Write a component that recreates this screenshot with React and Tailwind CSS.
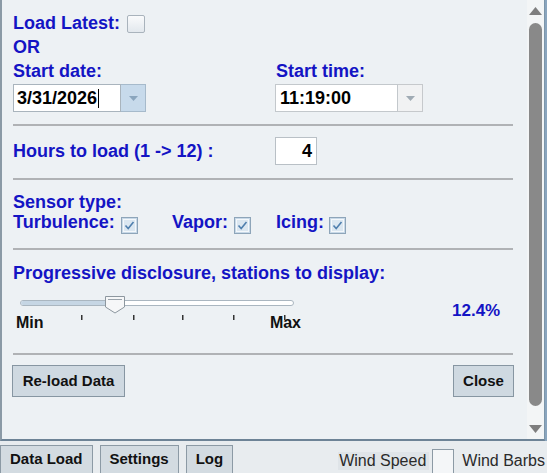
import React from "react"

const labelCls = "font-bold text-[18px] text-[#1414c4]"

function CheckedBox({ className = "" }) {
  return (
    <svg width="17" height="17" viewBox="0 0 17 17" className={className}>
      <rect x="0.5" y="0.5" width="16" height="16" fill="#c8d9e8" stroke="#8ea5b9" />
      <rect x="2.5" y="2.5" width="12" height="12" fill="#dbe7f1" stroke="#f4f8fb" />
      <path d="M4.5 8.5 L7.2 11.5 L12.5 5" fill="none" stroke="#4f7fae" strokeWidth="1.6" />
    </svg>
  )
}

function Separator({ className = "" }) {
  return <div className={`h-[2px] bg-[#b0b2b5] mr-[14px] ${className}`} />
}

function DropButton({ blue }) {
  return (
    <div
      className={`w-[25px] h-[28px] flex items-center justify-center border border-l-0 ${
        blue ? "bg-[#c7daeb] border-[#a6bacb]" : "bg-[#f1f2f3] border-[#c6c9cc]"
      }`}
    >
      <svg width="9" height="5" viewBox="0 0 9 5">
        <path d="M0 0 L9 0 L4.5 5 Z" fill={blue ? "#8aa5bd" : "#a0abb4"} />
      </svg>
    </div>
  )
}

function Slider() {
  const ticks = [68, 120, 169, 220, 271]
  return (
    <svg width="290" height="30" viewBox="0 0 290 30">
      <rect x="7.5" y="8.5" width="273" height="5" rx="2.5" fill="#ffffff" stroke="#aab6c0" />
      <rect x="8" y="9" width="92" height="4" rx="2" fill="#c6d6e4" />
      <path d="M92.5 4.5 L111.5 4.5 L111.5 15 L102 21 L92.5 15 Z" fill="#f6f7f8" stroke="#8d979f" />
      <line x1="95" y1="7.5" x2="109" y2="7.5" stroke="#9aa3ab" />
      {ticks.map((t) => (
        <rect key={t} x={t} y="23" width="1.5" height="5" fill="#333333" />
      ))}
    </svg>
  )
}

export default function App() {
  return (
    <div className="w-[547px] h-[473px] overflow-hidden bg-[#e8ecef] font-['Liberation_Sans',Arial,sans-serif] flex flex-col">
      <div className="flex h-[441px]">
        <div className="w-[545px] h-[441px] flex bg-[#edf1f4] border-l-2 border-b-2 border-r border-l-[#8b9aa6] border-b-[#6d8396] border-r-[#7c95a9]">
          {/* content */}
          <div className="flex-1 flex flex-col pl-[11px] pt-[11px]">
            <div className="flex items-start h-[24px]">
              <span className={`${labelCls} leading-[24px]`}>Load Latest:</span>
              <div className="ml-[7px] mt-[4px] w-[18px] h-[18px] rounded-[2px] border border-[#a9b3bc] bg-gradient-to-b from-[#fafbfc] to-[#e2e8ed]" />
            </div>
            <div className={`${labelCls} leading-[24px]`}>OR</div>
            <div className="grid grid-cols-[262px_auto]">
              <div className="flex flex-col">
                <span className={`${labelCls} leading-[24px]`}>Start date:</span>
                <div className="flex mt-px">
                  <div className="w-[108px] h-[28px] bg-white border border-[#a9b4bd] flex items-center pl-[3px] font-bold text-[18px] text-black">
                    3/31/2026
                    <span className="ml-px w-px h-[19px] bg-black" />
                  </div>
                  <DropButton blue />
                </div>
              </div>
              <div className="flex flex-col">
                <span className={`${labelCls} leading-[24px] pl-px`}>Start time:</span>
                <div className="flex mt-px">
                  <div className="w-[123px] h-[28px] bg-white border border-[#c3c8cc] flex items-center pl-[4px] font-bold text-[18px] text-black">
                    11:19:00
                  </div>
                  <DropButton />
                </div>
              </div>
            </div>

            <Separator className="mt-[12px]" />

            <div className="flex items-center h-[28px] mt-[11px]">
              <span className={`${labelCls} leading-[24px] w-[262px]`}>Hours to load (1 -&gt; 12) :</span>
              <div className="w-[42px] h-[28px] bg-white border border-[#b9c0c6] flex items-center justify-end pr-[4px] font-bold text-[18px] text-black">
                4
              </div>
            </div>

            <Separator className="mt-[13px]" />

            <div className={`${labelCls} leading-[20px] mt-[12px]`}>Sensor type:</div>
            <div className="flex items-start">
              <div className="flex items-start w-[159px]">
                <span className={`${labelCls} leading-[20px]`}>Turbulence:</span>
                <CheckedBox className="ml-[6px] mt-[5px]" />
              </div>
              <div className="flex items-start w-[104px]">
                <span className={`${labelCls} leading-[20px]`}>Vapor:</span>
                <CheckedBox className="ml-[6px] mt-[5px]" />
              </div>
              <div className="flex items-start">
                <span className={`${labelCls} leading-[20px]`}>Icing:</span>
                <CheckedBox className="ml-[5px] mt-[5px]" />
              </div>
            </div>

            <Separator className="mt-[14px]" />

            <div className={`${labelCls} leading-[20px] mt-[13px]`}>
              Progressive disclosure, stations to display:
            </div>
            <div className="flex items-start mt-[9px]">
              <div className="flex flex-col w-[290px]">
                <Slider />
                <div className="flex justify-between pl-[3px] pr-[2px] w-[290px] mt-[-7px] font-bold text-[16px] leading-[16px] text-[#111]">
                  <span>Min</span>
                  <span>Max</span>
                </div>
              </div>
              <span className="ml-[149px] mt-[9px] font-bold text-[17px] leading-[20px] text-[#1414c4]">12.4%</span>
            </div>

            <Separator className="mt-[22px]" />

            <div className="flex justify-between mt-[10px] mr-[13px] ml-[-1px]">
              <button className="h-[32px] w-[113px] bg-[#cfd9e1] border border-[#8796a2] font-bold text-[15px] text-[#111]">
                Re-load Data
              </button>
              <button className="h-[32px] w-[61px] bg-[#cfd9e1] border border-[#8796a2] font-bold text-[15px] text-[#111]">
                Close
              </button>
            </div>
          </div>

          {/* scrollbar */}
          <div className="w-[17px] h-full flex flex-col items-center bg-[#f3f5f6] pt-[7px]">
            <svg width="13" height="8" viewBox="0 0 13 8">
              <path d="M0 8 L6.5 0 L13 8 Z" fill="#7e7e7e" />
            </svg>
            <div className="mt-[8px] w-[13px] h-[383px] rounded-full bg-[#898989]" />
            <svg width="13" height="8" viewBox="0 0 13 8" className="mt-[19px]">
              <path d="M0 0 L13 0 L6.5 8 Z" fill="#7e7e7e" />
            </svg>
          </div>
        </div>
        <div className="flex-1 bg-[#8aa5be]" />
      </div>

      {/* bottom tabs */}
      <div className="flex items-start pt-[4px] flex-1">
        <div className="flex gap-[7px]">
          {["Data Load", "Settings", "Log"].map((t) => (
            <div
              key={t}
              className="h-[32px] px-[9px] pt-[4px] border border-[#8c9aa5] bg-[#d3dbe1] font-bold text-[15px] leading-[17px] text-[#111]"
            >
              {t}
            </div>
          ))}
        </div>
        <div className="ml-auto flex items-start text-[16px] leading-[18px] text-[#2a2a2a]">
          <span className="mt-[7px] bg-[#dfe4e8] pl-[1px] pr-[3px]">Wind Speed</span>
          <div className="ml-[3px] mt-[4px] w-[22px] h-[26px] border border-[#8c9aa5] border-b-2 border-b-[#2e8a8c] bg-[#f4f6f8]" />
          <span className="mt-[7px] ml-[8px] mr-[2px]">Wind Barbs</span>
        </div>
      </div>
    </div>
  )
}
